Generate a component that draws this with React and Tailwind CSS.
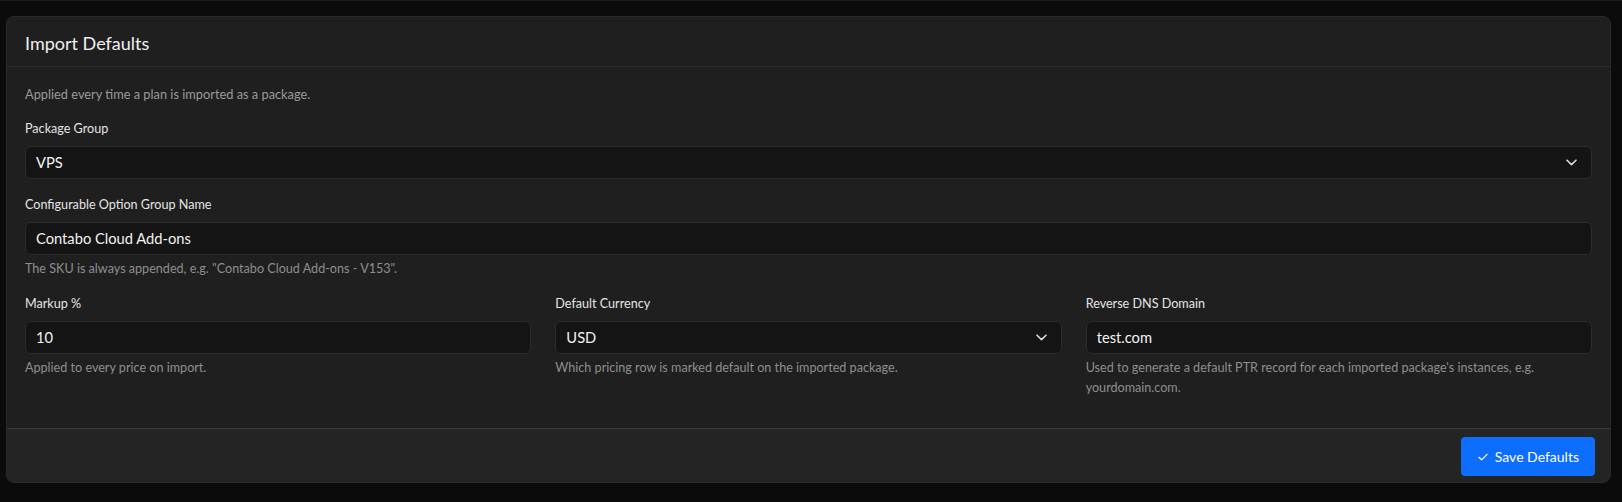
import React from "react";

const font = { fontFamily: "Lato, 'Noto Sans', sans-serif" };

function Chevron() {
  return (
    <svg width="11" height="7" viewBox="0 0 11 7" fill="none" className="shrink-0">
      <path d="M1 1.2 L5.5 5.6 L10 1.2" stroke="#d8d8d8" strokeWidth="1.6" strokeLinecap="round" strokeLinejoin="round" />
    </svg>
  );
}

function Label({ children }) {
  return <div className="text-[12.6px] leading-[20px] text-[#e4e4e4] mb-[7px]">{children}</div>;
}

function Hint({ children }) {
  return <div className="text-[12.6px] leading-[20px] text-[#8e8e8e] mt-[4px]">{children}</div>;
}

function Field({ value, select }) {
  return (
    <div className="h-[33px] rounded-[6px] border border-[#2c2c2c] bg-[#141414] pl-[10px] pr-[14px] flex items-center justify-between">
      <span className="text-[14.7px] text-[#f2f2f2]">{value}</span>
      {select && <Chevron />}
    </div>
  );
}

export default function App() {
  return (
    <div className="min-h-[502px] bg-[#0b0b0b] pt-[15px] pl-[6px] pr-[11px] pb-[20px] border-t border-[#1c1c1c]" style={font}>
      <div className="rounded-[8px] border border-[#2a2a2a] bg-[#1f1f1f] overflow-hidden">
        <div className="h-[50px] px-[18px] flex items-center border-b border-[#2e2e2e]">
          <h2 className="text-[18px] text-[#f0f0f0] leading-none pt-[2px]">Import Defaults</h2>
        </div>
        <div className="px-[18px] pt-[17px] pb-[30px]">
          <div className="text-[12.8px] leading-[20px] text-[#9a9a9a] mb-[15px]">Applied every time a plan is imported as a package.</div>
          <div className="mb-4">
            <Label>Package Group</Label>
            <Field value="VPS" select />
          </div>
          <div className="mb-[15px]">
            <Label>Configurable Option Group Name</Label>
            <Field value="Contabo Cloud Add-ons" />
            <Hint>The SKU is always appended, e.g. "Contabo Cloud Add-ons - V153".</Hint>
          </div>
          <div className="grid grid-cols-3 gap-x-6">
            <div>
              <Label>Markup %</Label>
              <Field value="10" />
              <Hint>Applied to every price on import.</Hint>
            </div>
            <div>
              <Label>Default Currency</Label>
              <Field value="USD" select />
              <Hint>Which pricing row is marked default on the imported package.</Hint>
            </div>
            <div>
              <Label>Reverse DNS Domain</Label>
              <Field value="test.com" />
              <Hint>Used to generate a default PTR record for each imported package's instances, e.g. yourdomain.com.</Hint>
            </div>
          </div>
        </div>
        <div className="border-t border-[#3a3a3a] bg-[#242424] flex justify-end pt-[8px] pb-[6px] pr-[15px]">
          <button className="h-[39px] pl-[17px] pr-[16px] rounded-[4px] bg-[#0d6efd] text-white text-[14px] flex items-center gap-[7px]">
            <svg width="10" height="8" viewBox="0 0 10 8" fill="none">
              <path d="M1 4.3 L3.7 6.8 L9 1.3" stroke="#ffffff" strokeWidth="1.2" strokeLinecap="round" strokeLinejoin="round" />
            </svg>
            <span>Save Defaults</span>
          </button>
        </div>
      </div>
    </div>
  );
}
